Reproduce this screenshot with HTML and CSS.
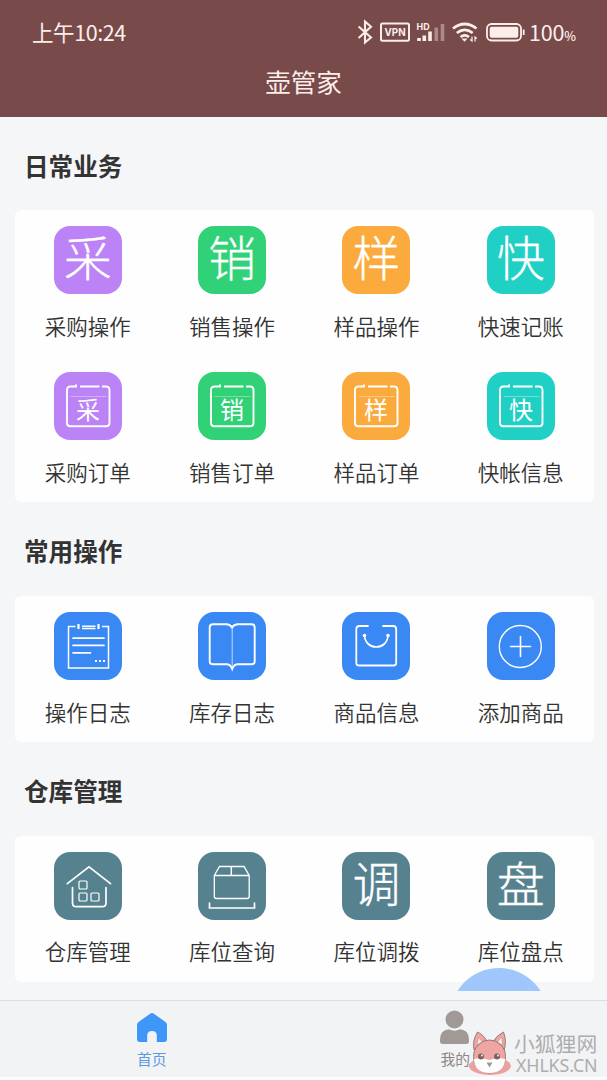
FILE: index.html
```
<!DOCTYPE html>
<html lang="zh-CN">
<head>
<meta charset="utf-8">
<title>壶管家</title>
<link rel="stylesheet" href="styles.css">
</head>
<body>
<div class="app">
  <header class="header">
    <div class="status">
      <span class="time">上午10:24</span>
      <svg class="status-icons" width="186" height="28" viewBox="354 18 186 28" fill="none" stroke="#fbeeea" stroke-width="2">
        <path d="M358.600 26.500 371 37.500 365 42.500V21.500L371 26.800 358.600 38" stroke-width="2.100"/>
        <rect x="381" y="23.500" width="28" height="17.300" rx="1.500" stroke-width="2"/>
        <text class="vpn" x="384.600" y="36.300" textLength="21" lengthAdjust="spacingAndGlyphs">VPN</text>
        <text class="hd" x="416.600" y="30" textLength="13" lengthAdjust="spacingAndGlyphs">HD</text>
        <path d="M419 41V38M424.300 41V35.500M430 41V31.500" stroke-width="3.600"/>
        <path d="M436.300 41V27.500M442.500 41V24" stroke-width="3.600" opacity=".4"/>
        <path d="M453 28.500Q464.700 19.500 476.500 28.500M456.800 33Q464.700 26.700 472.700 33M460.500 37Q464.700 33.800 469 37" stroke-width="2.700"/>
        <path d="M461.500 38.500h6l-3 3.300z" fill="#fbeeea" stroke="none"/>
        <path d="M472 36.500v4.500l-1.800-1.500M475 41.500v-4.500l1.800 1.500" stroke-width="1.200"/>
        <rect x="487" y="24" width="34" height="16.500" rx="4.500" stroke-width="1.800"/>
        <rect x="489.700" y="26.700" width="28.600" height="11" rx="2" fill="#fbeeea" stroke="none"/>
        <path d="M523.700 29.500v5.500" stroke-width="1.800"/>
      </svg>
      <span class="percent">100<small>%</small></span>
    </div>
    <h1 class="title">壶管家</h1>
  </header>

  <main>
    <h2 class="heading">日常业务</h2>
    <section class="card">
      <div class="cell"><div class="tile purple big">采</div><span class="label">采购操作</span></div>
      <div class="cell"><div class="tile green big">销</div><span class="label">销售操作</span></div>
      <div class="cell"><div class="tile orange big">样</div><span class="label">样品操作</span></div>
      <div class="cell"><div class="tile teal big">快</div><span class="label">快速记账</span></div>
      <div class="cell"><div class="tile purple"><svg class="icon" viewBox="0 0 68 68"><use href="#order"/><text class="mini" x="34" y="46.500">采</text></svg></div><span class="label">采购订单</span></div>
      <div class="cell"><div class="tile green"><svg class="icon" viewBox="0 0 68 68"><use href="#order"/><text class="mini" x="34" y="46.500">销</text></svg></div><span class="label">销售订单</span></div>
      <div class="cell"><div class="tile orange"><svg class="icon" viewBox="0 0 68 68"><use href="#order"/><text class="mini" x="34" y="46.500">样</text></svg></div><span class="label">样品订单</span></div>
      <div class="cell"><div class="tile teal"><svg class="icon" viewBox="0 0 68 68"><use href="#order"/><text class="mini" x="34" y="46.500">快</text></svg></div><span class="label">快帐信息</span></div>
    </section>

    <h2 class="heading">常用操作</h2>
    <section class="card">
      <div class="cell"><div class="tile blue"><svg class="icon" viewBox="0 0 68 68">
        <path d="M21.500 14.500H14.500V56H54.500V14.500H48M28 14.300H41.500M28 16.500H41.500" stroke-width="1.500" stroke-linecap="butt"/>
        <path d="M24.500 12v5M44.500 12v5" stroke-width="2.200" stroke-linecap="butt"/>
        <path d="M19 26.200H50M19 33.300H50M19 40.800H36.500" stroke-width="1.700"/>
        <path d="M41 49h2M45 49h2M49 49h2" stroke-width="2" stroke-linecap="butt"/>
      </svg></div><span class="label">操作日志</span></div>
      <div class="cell"><div class="tile blue"><svg class="icon" viewBox="0 0 68 68">
        <path d="M34 15.500Q32 12.300 28.500 12.300H15Q11.700 12.300 11.700 15.500V49.500Q11.700 52.300 15 52.300H28.500Q32.500 52.300 34.200 57Q36 52.300 40 52.300H53.500Q56.700 52.300 56.700 49.500V15.500Q56.700 12.300 53.500 12.300H40Q36 12.300 34 15.500Z" stroke-width="1.900"/>
        <path d="M34.200 16V55" stroke-width=".7"/>
      </svg></div><span class="label">库存日志</span></div>
      <div class="cell"><div class="tile blue"><svg class="icon" viewBox="0 0 68 68">
        <path d="M26 14H17.500Q14.300 14 14.300 17.200V51Q14.300 53.500 17 53.500H51.500Q54.200 53.500 54.200 51V17.200Q54.200 14 51 14H41" stroke-width="1.800"/>
        <path d="M22.500 23C23 39 45.500 39 46 23" stroke-width="1.700"/>
        <circle cx="22.500" cy="23.500" r="1.800" fill="#fff" stroke="none"/><circle cx="46" cy="23.500" r="1.800" fill="#fff" stroke="none"/>
      </svg></div><span class="label">商品信息</span></div>
      <div class="cell"><div class="tile blue"><svg class="icon" viewBox="0 0 68 68">
        <circle cx="33.300" cy="34.500" r="21" stroke-width="1.400"/><path d="M23.500 34.500H43.500M33.500 24.500V44.500" stroke-width="1.600"/>
      </svg></div><span class="label">添加商品</span></div>
    </section>

    <h2 class="heading">仓库管理</h2>
    <section class="card last">
      <div class="cell"><div class="tile slate"><svg class="icon" viewBox="0 0 68 68">
        <path d="M13.300 31.700 35 14.800 56.500 31.700M18.500 35.500V51Q18.500 54.700 22.500 54.700H48Q52 54.700 52 51V35.500" stroke-width="1.700"/>
        <rect x="25" y="29" width="8" height="8" rx="1" stroke-width="1.200"/><rect x="25" y="41" width="8" height="8" rx="1" stroke-width="1.200"/><rect x="37" y="41" width="8" height="8" rx="1" stroke-width="1.200"/>
      </svg></div><span class="label">仓库管理</span></div>
      <div class="cell"><div class="tile slate"><svg class="icon" viewBox="0 0 68 68">
        <path d="M16.300 23.500 21.500 14.500H46L51.200 23.500V44.500Q51.200 46.500 49 46.500H18.500Q16.300 46.500 16.300 44.500ZM16.300 23.500H51.200" stroke-width="1.300"/>
        <path d="M33.300 15V23" stroke-width="1.500"/>
        <path d="M11.500 51V56H56.500V51" stroke-width="1.700"/>
      </svg></div><span class="label">库位查询</span></div>
      <div class="cell"><div class="tile slate big">调</div><span class="label">库位调拨</span></div>
      <div class="cell"><div class="tile slate big">盘</div><span class="label">库位盘点</span></div>
    </section>
    <div class="fab-window"><div class="fab"></div></div>
  </main>

  <nav class="tabs">
    <div class="tab active">
      <svg width="32" height="36" viewBox="0 0 32 36"><path d="M14.500 4.500Q16 3.400 17.500 4.500L29.500 13Q31 14 31 16V30Q31 33 28 33H20.800V26.500Q20.800 22 16 22T11.200 26.500V33H4Q1 33 1 30V16Q1 14 2.500 13Z" fill="#3e96f8"/></svg>
      <span>首页</span>
    </div>
    <div class="tab">
      <svg width="32" height="36" viewBox="0 0 32 36" fill="#a09995"><circle cx="15.500" cy="10.500" r="9"/><path d="M1 32.500V30.500Q1 21 10 20.300Q15.500 23 21 20.300Q30 21 30 30.500V32.500Q30 35 27 35H4Q1 35 1 32.500Z"/></svg>
      <span>我的</span>
    </div>
  </nav>

  <div class="watermark">
    <svg width="44" height="46" viewBox="0 0 44 46">
      <ellipse cx="22" cy="35" rx="21" ry="9" fill="#eba19d"/>
      <g stroke="#806766" stroke-width=".8" stroke-linejoin="round">
        <path d="M6 19Q4 10 9.500 1Q16 4 20 12ZM24 12Q29 4 35.500 1Q39 10 36 20Z" fill="#efa5a1"/>
        <path d="M9 14 10.500 6.500 15 11.500ZM29 11.500 34 6 34.500 14Z" fill="#f7e9e7" stroke-width=".3"/>
        <ellipse cx="21.500" cy="25.500" rx="16" ry="16.500" fill="#efa5a1"/>
        <path d="M5.800 28Q14 26 21.500 29Q29 26 37.300 28Q36 42 21.500 42T5.800 28Z" fill="#fff" stroke="none"/>
      </g>
      <circle cx="13" cy="25.500" r="3" fill="#7c6160"/><circle cx="29" cy="25.500" r="3" fill="#7c6160"/>
      <circle cx="14" cy="24.500" r=".9" fill="#fff"/><circle cx="30" cy="24.500" r=".9" fill="#fff"/>
      <path d="M18.500 31.500H24.500L21.500 36.500Z" fill="#999"/>
    </svg>
    <div class="brand"><span class="brand-cn">小狐狸网</span><span class="brand-en">XHLKS.CN</span></div>
  </div>
</div>
<svg class="defs" width="0" height="0">
  <symbol id="order" viewBox="0 0 68 68" overflow="visible">
    <path d="M22 12.500V14.500H16.500Q13 14.500 13 18V51Q13 54.300 16.500 54.300H52Q55.500 54.300 55.500 51V18Q55.500 14.500 52 14.500H49V13.500M26 14.500H45.500" stroke-width="1.900" stroke-linecap="butt"/>
    <path d="M17 24.500H52" stroke-width=".6" opacity=".6"/>
  </symbol>
</svg>
</body>
</html>
```
FILE: styles.css
```
* { box-sizing: border-box; }
body {
  margin: 0;
  background: #fdfdfe;
  color: #333;
  font-family: "Noto Sans CJK SC", sans-serif;
}
.app { position: relative; width: 607px; height: 1080px; overflow: hidden; display: flex; flex-direction: column; }
.header { height: 117px; flex: none; background: #784a4a; color: #fbeeea; }
.status { height: 64px; display: flex; align-items: center; padding: 0 0 0 32px; }
.time { font-size: 21.500px; letter-spacing: -.4px; line-height: 30px; flex: 1; }
.status-icons { flex: none; margin-right: -12px; }
.percent { display: flex; align-items: baseline; font-size: 21.500px; width: 79px; line-height: 28px; flex: none; white-space: nowrap; padding-left: 1px; letter-spacing: -.2px; }
.percent small { font-size: 12.500px; font-weight: 500; line-height: 13px; }
.vpn, .hd { font-family: Inter, sans-serif; font-weight: 700; fill: #fbeeea; stroke: none; }
.vpn { font-size: 11px; }
.hd { font-size: 9px; }
.title { margin: 0; text-align: center; font-size: 25.500px; font-weight: 400; line-height: 34px; }
main { flex: 1; position: relative; background: #f5f6f8; }
.heading { margin: 0; height: 94px; padding: 3px 0 0 24px; line-height: 90px; font-size: 24.600px; font-weight: 700; }
.heading:first-child { height: 93px; }
.card {
  margin: 0 12px 0 15px;
  padding-left: .5px;
  display: grid;
  grid-template-columns: repeat(4, 144.400px);
  width: 579px;
  background: #fefefe;
  border-radius: 6px;
}
.cell { height: 146px; padding-top: 16px; display: flex; flex-direction: column; align-items: center; gap: 17px; }
.last .cell { gap: 16px; }
.tile { width: 68px; height: 68px; border-radius: 16px; color: #fff; display: flex; justify-content: center; flex: none; }
.big { font-size: 48px; line-height: 59px; font-weight: 300; -webkit-text-stroke: .3px #fff; }
.icon { width: 68px; height: 68px; fill: none; stroke: #fff; stroke-linecap: round; }
.mini { font-size: 24px; fill: #fff; stroke: none; text-anchor: middle; }
.label { font-size: 21.500px; line-height: 30px; font-weight: 350; color: #333; white-space: nowrap; }
.purple { background: #bb83f5; }
.green { background: #30d177; }
.orange { background: #fbaa3e; }
.teal { background: #20d0c5; }
.blue { background: #3988f3; }
.slate { background: #568290; }
.fab-window { position: absolute; left: 450px; top: 851px; width: 98px; height: 23px; overflow: hidden; }
.fab { width: 98px; height: 98px; border-radius: 50%; background: #9fc7fb; }
.tabs { flex: none; height: 77px; margin-bottom: 3px; display: flex; background: #f2f3f4; border-top: 1px solid #dcddde; }
.tab { flex: 1; display: flex; flex-direction: column; align-items: center; padding-top: 8px; color: #8c8784; font-size: 14.800px; line-height: 20px; gap: 4px; }
.active { color: #5a9be0; }
.watermark { position: absolute; left: 468px; top: 1031px; display: flex; gap: 2px; }
.brand { display: flex; flex-direction: column; color: #adadb0; }
.brand-cn { font-size: 20.800px; line-height: 24px; }
.brand-en { font-family: "Noto Sans", sans-serif; font-size: 17.800px; line-height: 20px; padding-left: 2px; letter-spacing: -.1px; }
.defs { position: absolute; }
```
